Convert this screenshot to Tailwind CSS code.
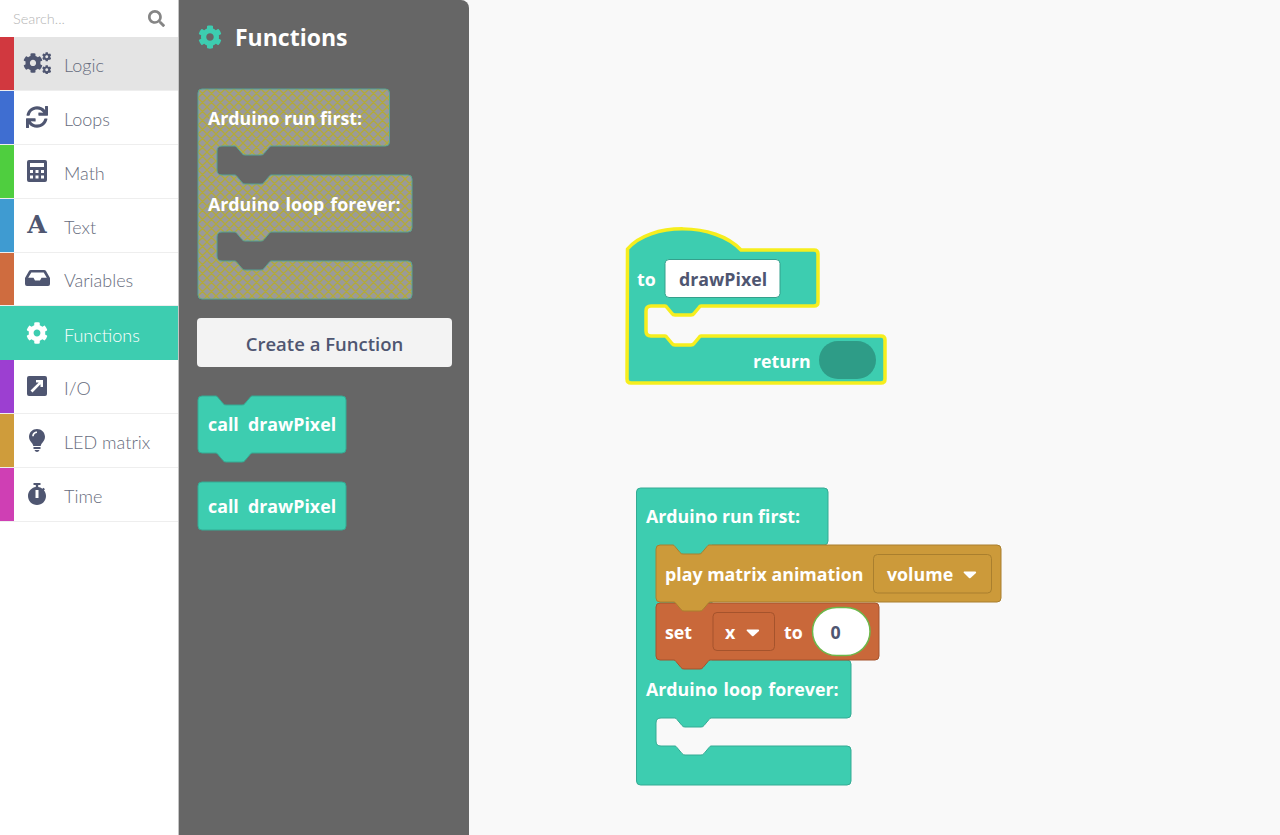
<!DOCTYPE html>
<html lang="en">
<head>
  <meta charset="UTF-8">
  <title>Blocks editor</title>
  <script src="https://cdn.jsdelivr.net/npm/@tailwindcss/browser@4"></script>
</head>
<body class="h-screen overflow-hidden flex bg-[#f9f9f9] font-['Lato',sans-serif]">
  <!-- shared icon shapes -->
  <svg width="0" height="0" class="absolute">
    <defs>
      <path id="cog" fill-rule="evenodd" d="M487.4 315.7l-42.6-24.6c4.3-23.2 4.3-47 0-70.2l42.6-24.6c4.9-2.8 7.1-8.6 5.5-14-11.1-35.6-30-67.8-54.7-94.6-3.8-4.1-10-5.1-14.8-2.3L380.8 110c-17.9-15.4-38.5-27.3-60.8-35.1V25.8c0-5.6-3.9-10.5-9.4-11.7-36.7-8.2-74.3-7.8-109.2 0-5.5 1.2-9.4 6.1-9.4 11.7V75c-22.2 7.9-42.8 19.8-60.8 35.1L88.7 85.5c-4.9-2.8-11-1.9-14.8 2.3-24.7 26.7-43.6 58.9-54.7 94.6-1.7 5.4.6 11.2 5.5 14L67.3 221c-4.3 23.2-4.3 47 0 70.2l-42.6 24.6c-4.9 2.8-7.1 8.6-5.5 14 11.1 35.6 30 67.8 54.7 94.6 3.8 4.1 10 5.1 14.8 2.3l42.6-24.6c17.9 15.4 38.5 27.3 60.8 35.1v49.2c0 5.6 3.9 10.5 9.4 11.7 36.7 8.2 74.3 7.8 109.2 0 5.5-1.2 9.4-6.1 9.4-11.7v-49.2c22.2-7.9 42.8-19.8 60.8-35.1l42.6 24.6c4.9 2.8 11 1.9 14.8-2.3 24.7-26.7 43.6-58.9 54.7-94.6 1.5-5.5-.7-11.3-5.6-14.1zM256 336c-44.1 0-80-35.9-80-80s35.9-80 80-80 80 35.9 80 80-35.9 80-80 80z"/>
      <pattern id="hatch" width="9" height="9" patternUnits="userSpaceOnUse" x="198" y="89">
        <rect width="9" height="9" fill="#9a9a9a"/>
        <path d="M-1 1L1 -1M-1 10L10 -1M8 10L10 8M-1 8L1 10M-1 -1L10 10M8 -1L10 1" stroke="#b3aa38" stroke-width="1.300" fill="none"/>
      </pattern>
    </defs>
  </svg>

  <!-- toolbox -->
  <aside class="w-[179px] h-full shrink-0 bg-white border-r border-[#c4c4c4]">
    <div class="h-[37px] flex items-center justify-between pl-[13px] pr-[13px]">
      <span class="text-[14.500px] font-light text-[#b5b5b5]">Search...</span>
      <svg viewBox="0 0 512 512" class="w-[17px] h-[17px] fill-[#858585]"><path d="M505 442.7L405.3 343c-4.5-4.5-10.6-7-17-7H372c27.6-35.3 44-79.7 44-128C416 93.1 322.9 0 208 0S0 93.1 0 208s93.1 208 208 208c48.3 0 92.7-16.4 128-44v16.3c0 6.4 2.5 12.5 7 17l99.7 99.7c9.4 9.4 24.6 9.4 33.9 0l28.3-28.3c9.4-9.4 9.4-24.6.1-34zM208 336c-70.7 0-128-57.2-128-128 0-70.7 57.2-128 128-128 70.7 0 128 57.2 128 128 0 70.7-57.2 128-128 128z"/></svg>
    </div>
    <div class="flex flex-col">
      <div class="flex h-[53.875px] bg-[#e4e4e4] border-b border-[#eeeeee]">
        <div class="w-[14px] bg-[#d1383f]"></div>
        <div class="w-[46px] pb-[1px] flex items-center justify-center">
          <svg viewBox="0 0 28 22" class="w-[28px] h-[22px] fill-[#4f5671]">
            <use href="#cog" transform="translate(0 1) scale(0.039)"/>
            <use href="#cog" transform="translate(19 0) scale(0.0185)"/>
            <use href="#cog" transform="translate(19 13) scale(0.0185)"/>
          </svg>
        </div>
        <span class="self-center ml-[4px] pt-[4px] text-[18px] font-light text-[#666b7c]">Logic</span>
      </div>
      <div class="flex h-[53.875px] border-b border-[#eeeeee]">
        <div class="w-[14px] bg-[#3f6ed1]"></div>
        <div class="w-[46px] pb-[1px] flex items-center justify-center">
          <svg viewBox="0 0 512 512" class="w-[22px] h-[22px] fill-[#4f5671]"><path d="M440.65 12.57l4 82.77A247.16 247.16 0 0 0 255.83 8C134.73 8 33.91 94.92 12.29 209.82A12 12 0 0 0 24.09 224h49.05a12 12 0 0 0 11.67-9.26 175.91 175.91 0 0 1 317-56.94l-101.46-4.86a12 12 0 0 0-12.57 12v47.41a12 12 0 0 0 12 12H500a12 12 0 0 0 12-12V12a12 12 0 0 0-12-12h-47.37a12 12 0 0 0-11.98 12.57zM255.83 432a175.61 175.61 0 0 1-146-77.8l101.8 4.87a12 12 0 0 0 12.57-12v-47.4a12 12 0 0 0-12-12H12a12 12 0 0 0-12 12V500a12 12 0 0 0 12 12h47.35a12 12 0 0 0 12-12.6l-4.15-82.57A247.17 247.17 0 0 0 255.83 504c121.11 0 221.93-86.92 243.55-201.82a12 12 0 0 0-11.8-14.18h-49.05a12 12 0 0 0-11.67 9.26A175.86 175.86 0 0 1 255.83 432z"/></svg>
        </div>
        <span class="self-center ml-[4px] pt-[4px] text-[18px] font-light text-[#666b7c]">Loops</span>
      </div>
      <div class="flex h-[53.875px] border-b border-[#eeeeee]">
        <div class="w-[14px] bg-[#4fce3f]"></div>
        <div class="w-[46px] pb-[1px] flex items-center justify-center">
          <svg viewBox="0 0 20 22" class="w-[20px] h-[22px] fill-[#4f5671]"><path fill-rule="evenodd" d="M2 0H18Q20 0 20 2V20Q20 22 18 22H2Q0 22 0 20V2Q0 0 2 0ZM3 3V7H17V3ZM3 10V13H6V10ZM8.5 10V13H11.500V10ZM14 10V13H17V10ZM3 15.500V18.500H6V15.500ZM8.500 15.500V18.500H11.500V15.500ZM14 15.500V18.500H17V15.500Z"/></svg>
        </div>
        <span class="self-center ml-[4px] pt-[4px] text-[18px] font-light text-[#666b7c]">Math</span>
      </div>
      <div class="flex h-[53.875px] border-b border-[#eeeeee]">
        <div class="w-[14px] bg-[#3f9bd1]"></div>
        <div class="w-[46px] pb-[1px] flex items-center justify-center">
          <span class="text-[25px] leading-none font-bold text-[#4f5671] font-['DejaVu_Serif',serif]">A</span>
        </div>
        <span class="self-center ml-[4px] pt-[4px] text-[18px] font-light text-[#666b7c]">Text</span>
      </div>
      <div class="flex h-[53.875px] border-b border-[#eeeeee]">
        <div class="w-[14px] bg-[#cf6c3f]"></div>
        <div class="w-[46px] pb-[1px] flex items-center justify-center">
          <svg viewBox="0 0 25 16" class="w-[25px] h-[16px] fill-[#4f5671]"><path fill-rule="evenodd" d="M6 0H19Q20.500 0 21 1L25 8V14Q25 16 23 16H2Q0 16 0 14V8L4 1Q4.500 0 6 0ZM6.300 2.500L3.200 7.700H8.500L10 10.500H15L16.500 7.700H21.800L18.700 2.500Z"/></svg>
        </div>
        <span class="self-center ml-[4px] pt-[4px] text-[18px] font-light text-[#666b7c]">Variables</span>
      </div>
      <div class="flex h-[53.875px] bg-[#3dcdb0]">
        <div class="w-[14px]"></div>
        <div class="w-[46px] pb-[1px] flex items-center justify-center">
          <svg viewBox="0 0 512 512" class="w-[22px] h-[22px] fill-white"><use href="#cog"/></svg>
        </div>
        <span class="self-center ml-[4px] pt-[4px] text-[18px] font-light text-white">Functions</span>
      </div>
      <div class="flex h-[53.875px] border-b border-[#eeeeee]">
        <div class="w-[14px] bg-[#9c3fd1]"></div>
        <div class="w-[46px] pb-[1px] flex items-center justify-center">
          <svg viewBox="0 0 20 20" class="w-[20px] h-[20px] fill-[#4f5671]"><path fill-rule="evenodd" d="M2 0H18Q20 0 20 2V18Q20 20 18 20H2Q0 20 0 18V2Q0 0 2 0ZM9 4V6.500H11.700L3.500 14.500L5.500 16.500L13.500 8.300V11H16V4Z"/></svg>
        </div>
        <span class="self-center ml-[4px] pt-[4px] text-[18px] font-light text-[#666b7c]">I/O</span>
      </div>
      <div class="flex h-[53.875px] border-b border-[#eeeeee]">
        <div class="w-[14px] bg-[#cf9c3b]"></div>
        <div class="w-[46px] pb-[1px] flex items-center justify-center">
          <svg viewBox="0 0 16 23" class="w-[16px] h-[23px] fill-[#4f5671]"><path fill-rule="evenodd" d="M8 0C3.600 0 0 3.300 0 7.800C0 10.500 1.200 12 2.400 13.500C3.300 14.600 4 15.500 4.300 17H11.700C12 15.500 12.700 14.600 13.600 13.500C14.800 12 16 10.500 16 7.800C16 3.300 12.400 0 8 0ZM8 2.500C5.300 2.500 3.200 4.600 3.200 7.200H4.800C4.800 5.500 6.200 4 8 4ZM4.500 18H11.500V20H4.500ZM5.500 21H10.500C10 22.300 9 23 8 23C7 23 6 22.300 5.500 21Z"/></svg>
        </div>
        <span class="self-center ml-[4px] pt-[4px] text-[18px] font-light text-[#666b7c]">LED matrix</span>
      </div>
      <div class="flex h-[53.875px] border-b border-[#eeeeee]">
        <div class="w-[14px] bg-[#cf3fb4]"></div>
        <div class="w-[46px] pb-[1px] flex items-center justify-center">
          <svg viewBox="0 0 18 22" class="w-[18px] h-[22px] fill-[#4f5671]"><path fill-rule="evenodd" d="M5.500 0H12.500V2H10.200V4.100C11.800 4.300 13.200 4.900 14.400 5.800L15.500 4.700L17 6.200L15.900 7.300C17.200 8.900 18 10.900 18 13C18 18 14 22 9 22C4 22 0 18 0 13C0 8.500 3.400 4.700 7.800 4.100V2H5.500ZM7.500 7V15H10.500V7Z"/></svg>
        </div>
        <span class="self-center ml-[4px] pt-[4px] text-[18px] font-light text-[#666b7c]">Time</span>
      </div>
    </div>
  </aside>

  <!-- flyout -->
  <section class="w-[290px] h-full shrink-0 bg-[#666666] rounded-tr-[8px] pl-[19px] flex flex-col items-start font-['Open_Sans',sans-serif]">
    <div class="h-[75px] pt-[25px] flex items-start gap-[13px]">
      <svg viewBox="0 0 512 512" class="w-[24px] h-[24px] fill-[#3dcdb0]"><use href="#cog"/></svg>
      <span class="text-[23px] leading-[25px] font-bold text-white">Functions</span>
    </div>
    <svg width="216" height="211" viewBox="198 89 216 211" class="mt-[14px] overflow-visible block">
      <path fill="url(#hatch)" stroke="#55a596" stroke-width="1" d="M198 93q0-4 4-4H385.500q4 0 4 4V142q0 4-4 4H273h-2q-1 0-2 1.500l-5 6q-1 1.500-3 1.500h-16q-2 0-3-1.500l-5-6q-1-1.500-2-1.500H222q-5 0-5 5V170q0 5 5 5H235q1 0 2 1.500l5 6q1 1.500 3 1.500h16q2 0 3-1.500l5-6q1-1.500 2-1.500h2H408q4 0 4 4V228q0 4-4 4H273h-2q-1 0-2 1.500l-5 6q-1 1.500-3 1.500h-16q-2 0-3-1.500l-5-6q-1-1.500-2-1.500H222q-5 0-5 5V256q0 5 5 5H235q1 0 2 1.500l5 6q1 1.500 3 1.500h16q2 0 3-1.500l5-6q1-1.500 2-1.500h2H408q4 0 4 4V295q0 4-4 4H202q-4 0-4-4Z"/>
      <text x="208" y="125" fill="#fff" font-size="17.800" font-weight="700">Arduino run first:</text>
      <text x="208" y="211" fill="#fff" font-size="17.800" font-weight="700" word-spacing="1.500">Arduino loop forever:</text>
    </svg>
    <button class="mt-[18px] -ml-[1px] w-[255px] h-[49px] pt-[3px] bg-[#f3f3f3] rounded-[4px] text-[18.500px] font-semibold text-[#4f5671]">Create a Function</button>
    <svg width="148" height="67" viewBox="198 396 148 67" class="mt-[29px] overflow-visible block">
      <path fill="#3dcdb0" stroke="#35ab94" stroke-width="1" d="M198 400q0-4 4-4H216q1 0 2 1.500l5 6q1 1.500 3 1.500h16q2 0 3-1.500l5-6q1-1.500 2-1.500h2H342q4 0 4 4V449q0 4-4 4H254h-2q-1 0-2 1.500l-5 6q-1 1.500-3 1.500h-16q-2 0-3-1.500l-5-6q-1-1.500-2-1.500H202q-4 0-4-4Z"/>
      <text x="208" y="431" fill="#fff" font-size="17.800" font-weight="700" xml:space="preserve">call  drawPixel</text>
    </svg>
    <svg width="148" height="48" viewBox="198 482 148 48" class="mt-[19px] overflow-visible block">
      <rect x="198" y="482" width="148" height="48" rx="4" fill="#3dcdb0" stroke="#35ab94" stroke-width="1"/>
      <text x="208" y="513" fill="#fff" font-size="17.800" font-weight="700" xml:space="preserve">call  drawPixel</text>
    </svg>
  </section>

  <!-- workspace -->
  <main class="relative flex-1 h-full bg-[#f9f9f9] font-['Open_Sans',sans-serif]">
    <svg width="811" height="835" viewBox="469 0 811 835" class="absolute inset-0">
      <!-- function definition, selected -->
      <path fill="#3dcdb0" stroke="#f6ee1e" stroke-width="3.500" stroke-linejoin="round" d="M627.500 249C650 222 715 222 741 250H814q4 0 4 4V302q0 4-4 4H703h-2q-1 0-2 1.500l-5 6q-1 1.500-3 1.500h-16q-2 0-3-1.500l-5-6q-1-1.500-2-1.500H651q-5 0-5 5V331q0 5 5 5H665q1 0 2 1.500l5 6q1 1.500 3 1.500h16q2 0 3-1.500l5-6q1-1.500 2-1.500h2H881q4 0 4 4V379q0 4-4 4H631q-4 0-4-4Z"/>
      <text x="637" y="286" fill="#fff" font-size="17.800" font-weight="700">to</text>
      <rect x="665" y="259.500" width="115" height="38" rx="4" fill="#fff" stroke="#35a08c"/>
      <text x="679" y="286" fill="#4f5671" font-size="17.800" font-weight="700">drawPixel</text>
      <text x="753" y="368" fill="#fff" font-size="17.800" font-weight="700">return</text>
      <rect x="819" y="341" width="57" height="38" rx="19" fill="#2e9c87"/>

      <!-- run first / loop forever -->
      <path fill="#3dcdb0" stroke="#35ab94" d="M636.500 492q0-4 4-4H824q4 0 4 4V541q0 4-4 4H712V660H847q4 0 4 4V714q0 4-4 4H713h-2q-1 0-2 1.500l-5 6q-1 1.500-3 1.500h-16q-2 0-3-1.500l-5-6q-1-1.500-2-1.500H661q-5 0-5 5V741q0 5 5 5H675q1 0 2 1.500l5 6q1 1.500 3 1.500h16q2 0 3-1.500l5-6q1-1.500 2-1.500h2H847q4 0 4 4V781q0 4-4 4H640.500q-4 0-4-4Z"/>
      <text x="646" y="523" fill="#fff" font-size="17.800" font-weight="700">Arduino run first:</text>
      <text x="646" y="696" fill="#fff" font-size="17.800" font-weight="700" word-spacing="1.500">Arduino loop forever:</text>

      <!-- set x to 0 -->
      <path fill="#c9683a" stroke="#a5532c" d="M656 607q0-4 4-4H875q4 0 4 4V656q0 4-4 4H712h-2q-1 0-2 1.500l-5 6q-1 1.500-3 1.500h-16q-2 0-3-1.500l-5-6q-1-1.500-2-1.500H660q-4 0-4-4Z"/>
      <text x="665" y="639" fill="#fff" font-size="17.800" font-weight="700">set</text>
      <rect x="713" y="612.500" width="61.500" height="38" rx="4" fill="#c9683a" stroke="#a5532c"/>
      <text x="725" y="639" fill="#fff" font-size="17.800" font-weight="700">x</text>
      <path d="M747 629.500H758.500Q759.500 630 759 631L753.500 636Q752.800 636.500 752 636L747 631Q746 630 747 629.500Z" fill="#fff"/>
      <text x="784" y="639" fill="#fff" font-size="17.800" font-weight="700">to</text>
      <rect x="812.500" y="607.500" width="57.500" height="48" rx="24" fill="#fff" stroke="#6cb84a" stroke-width="1.500"/>
      <text x="830.500" y="639" fill="#4f5671" font-size="17.800" font-weight="700">0</text>

      <!-- play matrix animation -->
      <path fill="#cc9a3a" stroke="#a97f2e" d="M656 549q0-4 4-4H673q1 0 2 1.500l5 6q1 1.500 3 1.500h16q2 0 3-1.500l5-6q1-1.500 2-1.500h2H997q4 0 4 4V598q0 4-4 4H712h-2q-1 0-2 1.500l-5 6q-1 1.500-3 1.500h-16q-2 0-3-1.500l-5-6q-1-1.500-2-1.500H660q-4 0-4-4Z"/>
      <text x="665" y="581" fill="#fff" font-size="17.800" font-weight="700">play matrix animation</text>
      <rect x="873.500" y="554.500" width="118" height="38.500" rx="4" fill="#cc9a3a" stroke="#a97f2e"/>
      <text x="887" y="581" fill="#fff" font-size="17.800" font-weight="700">volume</text>
      <path d="M964 571.500H975.500Q976.500 572 976 573L970.500 578Q969.800 578.500 969 578L964 573Q963 572 964 571.500Z" fill="#fff"/>
    </svg>
  </main>
</body>
</html>
